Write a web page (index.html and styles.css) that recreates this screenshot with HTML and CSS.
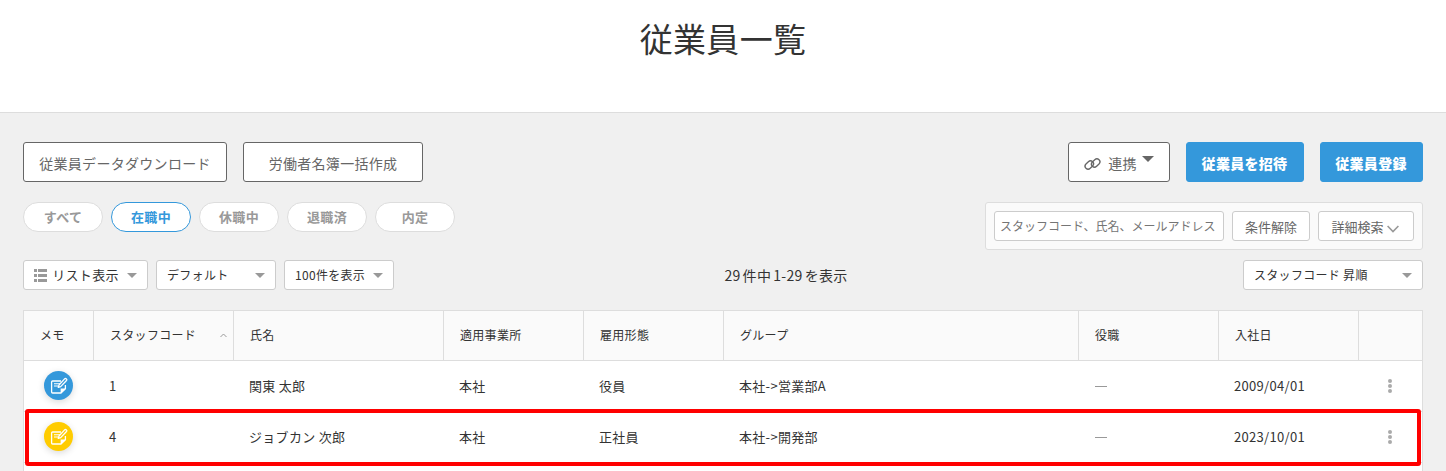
FILE: index.html
```html
<!DOCTYPE html>
<html lang="ja">

<head>
    <meta charset="UTF-8">
    <meta name="viewport" content="width=device-width, initial-scale=1.0">
    <title>従業員一覧</title>
    <link rel="stylesheet" href="styles.css">
</head>

<body>
    <svg class="defs" width="0" height="0">
        <symbol id="icon-memo" viewBox="0 0 18 18">
            <path d="M11 4H2.6Q1.6 4 1.6 5V15Q1.6 16 2.6 16H11L15.4 11.8V8" fill="none" stroke="#fff" stroke-width="1.3" stroke-linejoin="round" />
            <path d="M10.6 16.2V11.6H15.6Z" fill="#fff" />
            <path d="M4 6.7H10M4 9H8" stroke="#fff" stroke-width="1.1" />
            <path d="M8.2 10.4L9 8L14.6 1.9Q15.4 1.1 16.4 1.9Q17.2 2.7 16.5 3.5L10.7 9.6Z" fill="none" stroke="#fff" stroke-width="1.3" stroke-linejoin="round" />
        </symbol>
    </svg>

    <header class="page-header">
        <h1>従業員一覧</h1>
    </header>

    <main class="content">
        <div class="row actions">
            <a class="btn btn-download">従業員データダウンロード</a>
            <a class="btn btn-roster">労働者名簿一括作成</a>
            <div class="right">
                <a class="btn btn-link">
                    <svg class="chain" width="17" height="14" viewBox="0 0 17 14" fill="none" stroke="#666" stroke-width="1.3">
                        <rect x="-4.7" y="-3" width="9.4" height="6" rx="3" transform="translate(5.3 8) rotate(-45)" />
                        <rect x="-4.7" y="-3" width="9.4" height="6" rx="3" transform="translate(11.7 6) rotate(-45)" />
                    </svg>
                    <span>連携</span>
                    <i class="caret caret-dark"></i>
                </a>
                <a class="btn btn-primary btn-invite">従業員を招待</a>
                <a class="btn btn-primary btn-add">従業員登録</a>
            </div>
        </div>

        <div class="row filters">
            <div class="pills">
                <a class="pill">すべて</a>
                <a class="pill active">在職中</a>
                <a class="pill">休職中</a>
                <a class="pill">退職済</a>
                <a class="pill">内定</a>
            </div>
            <div class="search">
                <div class="search-input">スタッフコード、氏名、メールアドレス</div>
                <a class="search-btn">条件解除</a>
                <a class="search-btn detail">詳細検索
                    <svg width="12" height="8" viewBox="0 0 12 8" fill="none" stroke="#999" stroke-width="1.6">
                        <path d="M.6 1L6 6.6L11.4 1" />
                    </svg>
                </a>
            </div>
        </div>

        <div class="row display">
            <div class="select select-view">
                <svg width="13" height="13" viewBox="0 0 13 13" fill="#999">
                    <path d="M0 0H3V3H0ZM4 0H13V3H4ZM0 5H3V8H0ZM4 5H13V8H4ZM0 10H3V13H0ZM4 10H13V13H4Z" />
                </svg>
                <span>リスト表示</span>
                <i class="caret"></i>
            </div>
            <div class="select select-layout"><span>デフォルト</span><i class="caret"></i></div>
            <div class="select select-count"><span>100件を表示</span><i class="caret"></i></div>
            <p class="count">29 件中 1-29 を表示</p>
            <div class="select select-sort"><span>スタッフコード 昇順</span><i class="caret"></i></div>
        </div>

        <div class="table">
            <div class="tr th">
                <div>メモ</div>
                <div>スタッフコード
                    <svg class="sort" width="7" height="5" viewBox="0 0 7 5" fill="none" stroke="#999">
                        <path d="M.5 4L3.5 1L6.5 4" />
                    </svg>
                </div>
                <div>氏名</div>
                <div>適用事業所</div>
                <div>雇用形態</div>
                <div>グループ</div>
                <div>役職</div>
                <div>入社日</div>
                <div></div>
            </div>
            <div class="tr td">
                <div><span class="memo blue"><svg width="18" height="18"><use href="#icon-memo" /></svg></span></div>
                <div>1</div>
                <div>関東 太郎</div>
                <div>本社</div>
                <div>役員</div>
                <div>本社-&gt;営業部A</div>
                <div><i class="none"></i></div>
                <div>2009/04/01</div>
                <div class="more"><i></i><i></i><i></i></div>
            </div>
            <div class="tr td">
                <div><span class="memo yellow"><svg width="18" height="18"><use href="#icon-memo" /></svg></span></div>
                <div>4</div>
                <div>ジョブカン 次郎</div>
                <div>本社</div>
                <div>正社員</div>
                <div>本社-&gt;開発部</div>
                <div><i class="none"></i></div>
                <div>2023/10/01</div>
                <div class="more"><i></i><i></i><i></i></div>
                <span class="highlight"></span>
            </div>
        </div>
    </main>
</body>

</html>
```
FILE: styles.css
```css
* {
    box-sizing: border-box;
}

body {
    margin: 0;
    height: 471px;
    overflow: hidden;
    display: flex;
    flex-direction: column;
    background: #f0f0f0;
    color: #333;
    font-family: "Noto Sans CJK JP", sans-serif;
    font-size: 13px;
    letter-spacing: 0.3px;
    white-space: nowrap;
}

.defs {
    position: absolute;
}

.page-header {
    height: 113px;
    flex: none;
    background: #fff;
    border-bottom: 1px solid #ddd;
    text-align: center;
}

h1 {
    margin: 0;
    padding-top: 13px;
    font-size: 33px;
    font-weight: 400;
    line-height: 50px;
    letter-spacing: 0.35px;
}

.content {
    flex: 1;
    min-height: 0;
    display: flex;
    flex-direction: column;
    padding: 29px 23px 0;
}

.row {
    display: flex;
    flex: none;
}

/* top buttons */
.actions {
    height: 40px;
    gap: 16px;
}

.btn {
    height: 40px;
    display: flex;
    align-items: center;
    justify-content: center;
    padding-top: 1px;
    background: #fff;
    border: 1px solid #666;
    border-radius: 3px;
    color: #666;
    font-size: 14px;
}

.btn-download {
    width: 204px;
}

.btn-roster {
    width: 180px;
}

.right {
    display: flex;
    gap: 16px;
    margin-left: auto;
}

.btn-link {
    width: 102px;
}

.chain {
    margin: 2px 7px 0 0;
}

.btn-primary {
    padding-right: 1px;
    background: #3498db;
    border-color: #3498db;
    color: #fff;
    font-weight: 900;
}

.btn-invite {
    width: 118px;
}

.btn-add {
    width: 103px;
}

.caret {
    border: 5px solid transparent;
    border-top-color: #999;
    border-bottom: 0;
}

.caret-dark {
    margin: 0 0 7px 5px;
    border-width: 6px 6px 0;
    border-top-color: #666;
}

/* status filter and search */
.filters {
    margin-top: 20px;
    height: 48px;
    justify-content: space-between;
}

.pills {
    display: flex;
    gap: 8px;
}

.pill {
    width: 80px;
    height: 30px;
    background: #fff;
    border: 1px solid #ddd;
    border-radius: 15px;
    color: #999;
    font-weight: 700;
    line-height: 28px;
    text-align: center;
}

.pill.active {
    border-color: #3498db;
    color: #3498db;
}

.search {
    display: flex;
    gap: 8px;
    height: 48px;
    padding: 8px;
    background: #fafafa;
    border: 1px solid #ddd;
    border-radius: 3px;
}

.search-input,
.search-btn {
    height: 30px;
    background: #fff;
    border: 1px solid #ccc;
    border-radius: 3px;
    color: #666;
    line-height: 29px;
}

.search-input {
    width: 230px;
    padding-left: 5px;
    color: #757575;
    font-size: 12px;
    line-height: 28px;
    letter-spacing: 0;
}

.search-btn {
    width: 78px;
    text-align: center;
    letter-spacing: 0;
}

.search-btn.detail {
    width: 96px;
    padding-right: 1px;
}

.detail svg {
    margin: 0 0 -1px 1px;
}

/* display settings */
.display {
    margin-top: 10px;
    gap: 8px;
}

.select {
    height: 30px;
    display: flex;
    align-items: center;
    justify-content: space-between;
    padding: 0 10px;
    background: #fff;
    border: 1px solid #ccc;
    border-radius: 3px;
    font-size: 12px;
}

.select span {
    margin-top: -2px;
}

.select-view {
    width: 125px;
    font-size: 13px;
}

.select-view span {
    margin: -2px 3px 0 0;
}

.select-layout {
    width: 120px;
}

.select-count {
    width: 110px;
}

.select-sort {
    width: 180px;
}

.count {
    flex: 1;
    margin: 0;
    padding-right: 65px;
    text-align: center;
    font-size: 14px;
    line-height: 30px;
    word-spacing: -1.4px;
}

/* employee table */
.table {
    flex: 1;
    margin-top: 20px;
    background: #fff;
    border: 1px solid #ddd;
    border-bottom: 0;
}

.tr {
    position: relative;
    display: grid;
    grid-template-columns: 70px 140px 210px 140px 140px 355px 140px 140px 1fr;
    border-bottom: 1px solid #ddd;
}

.tr > div {
    display: flex;
    align-items: center;
    padding: 0 0 2px 15px;
}

.th {
    height: 50px;
    background: #fafafa;
    font-size: 12px;
}

.tr.th > div {
    padding: 0 0 2px 16px;
    border-right: 1px solid #ddd;
}

.tr.th > div:last-child {
    border-right: 0;
}

.sort {
    margin: 2px 6px 0 auto;
}

.td {
    height: 51px;
}

.memo {
    width: 29px;
    height: 29px;
    display: flex;
    align-items: center;
    justify-content: center;
    margin: 1px 0 0 5px;
    border-radius: 50%;
    box-shadow: 0 2px 7px rgba(0, 0, 0, 0.15);
}

.blue {
    background: #3498db;
}

.yellow {
    background: #fc0;
}

.none {
    width: 12px;
    height: 1px;
    margin: 3px 0 0 1px;
    background: #999;
}

.tr > .more {
    flex-direction: column;
    justify-content: center;
    gap: 1px;
    padding: 0 1px 0 0;
}

.more i {
    width: 4px;
    height: 4px;
    border-radius: 50%;
    background: #aaa;
}

/* frame drawn over the highlighted row */
.highlight {
    position: absolute;
    inset: -3px 1px -4px 1px;
    border: 4px solid #f00;
    border-radius: 3px;
}
```
